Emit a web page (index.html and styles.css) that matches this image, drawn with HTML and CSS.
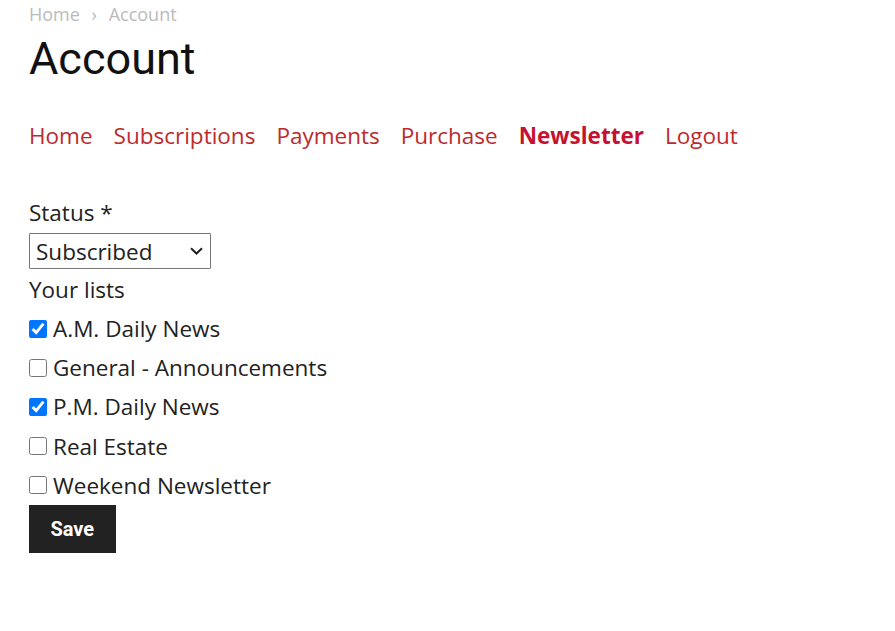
FILE: index.html
```html
<!DOCTYPE html>
<html lang="en">
<head>
    <meta charset="UTF-8">
    <meta name="viewport" content="width=device-width, initial-scale=1.0">
    <title>Account</title>
    <link rel="stylesheet" href="styles.css">
</head>
<body>

<!-- Breadcrumb -->
<div class="breadcrumb">
    <a href="#">Home</a>
    <span class="sep">›</span>
    <span>Account</span>
</div>

<h1 class="page-title">Account</h1>

<!-- Account tabs -->
<nav class="account-nav">
    <a href="#">Home</a>
    <a href="#">Subscriptions</a>
    <a href="#">Payments</a>
    <a href="#">Purchase</a>
    <a href="#" class="active">Newsletter</a>
    <a href="#">Logout</a>
</nav>

<form class="newsletter-form">
    <label class="field-label status-label" for="status">Status *</label>
    <div class="select-wrap">
        <select id="status" class="status-select">
            <option>Subscribed</option>
            <option>Unsubscribed</option>
        </select>
        <svg class="select-arrow" width="13" height="8" viewBox="0 0 13 8">
            <path d="M1 1.2 L6.5 6.5 L12 1.2" fill="none" stroke="#222" stroke-width="2"/>
        </svg>
    </div>

    <div class="field-label">Your lists</div>
    <label class="list-item"><input type="checkbox" checked> A.M. Daily News</label>
    <label class="list-item"><input type="checkbox"> General - Announcements</label>
    <label class="list-item"><input type="checkbox" checked> P.M. Daily News</label>
    <label class="list-item"><input type="checkbox"> Real Estate</label>
    <label class="list-item"><input type="checkbox"> Weekend Newsletter</label>

    <button type="button" class="save-btn">Save</button>
</form>

</body>
</html>
```

FILE: styles.css
```css
body {
    font-family: "Open Sans", sans-serif;
    margin: 0;
    padding: 0 29px;
    color: #222;
    background-color: #fff;
}
.breadcrumb {
    font-size: 18px;
    line-height: 28px;
    color: #bbb;
}
.breadcrumb a {
    color: #bbb;
    text-decoration: none;
}
.breadcrumb .sep {
    margin: 0 7px;
}
.page-title {
    font-family: Roboto, sans-serif;
    font-weight: 400;
    font-size: 45px;
    line-height: 52px;
    margin: 5px 0 0;
    color: #111;
}
.account-nav {
    display: flex;
    gap: 21px;
    margin-top: 34px;
    font-size: 22.5px;
    line-height: 33px;
}
.account-nav a {
    color: #bd2a2e;
    text-decoration: none;
}
.account-nav a.active {
    font-weight: 700;
    color: #c41230;
}
.newsletter-form {
    display: flex;
    flex-direction: column;
    align-items: flex-start;
    margin-top: 41px;
    font-size: 22.5px;
}
.field-label {
    display: block;
    line-height: 39px;
}
.status-label {
    line-height: 40px;
}
.select-wrap {
    position: relative;
    margin-bottom: 1px;
}
.status-select {
    appearance: none;
    font-family: "Open Sans", sans-serif;
    font-size: 22.5px;
    color: #222;
    width: 182px;
    height: 36px;
    padding: 0 6px;
    border: 1px solid #767676;
    border-radius: 1px;
    background-color: #fff;
    display: block;
}
.select-arrow {
    position: absolute;
    right: 8px;
    top: 14px;
    pointer-events: none;
}
.list-item {
    display: flex;
    align-items: center;
    line-height: 39.2px;
}
.list-item input {
    width: 18px;
    height: 18px;
    margin: 0 6px 0 0;
}
.save-btn {
    font-family: Roboto, sans-serif;
    font-weight: 700;
    font-size: 20px;
    color: #fff;
    background-color: #222;
    border: none;
    border-radius: 0;
    height: 48px;
    padding: 0 21.5px;
}
```
